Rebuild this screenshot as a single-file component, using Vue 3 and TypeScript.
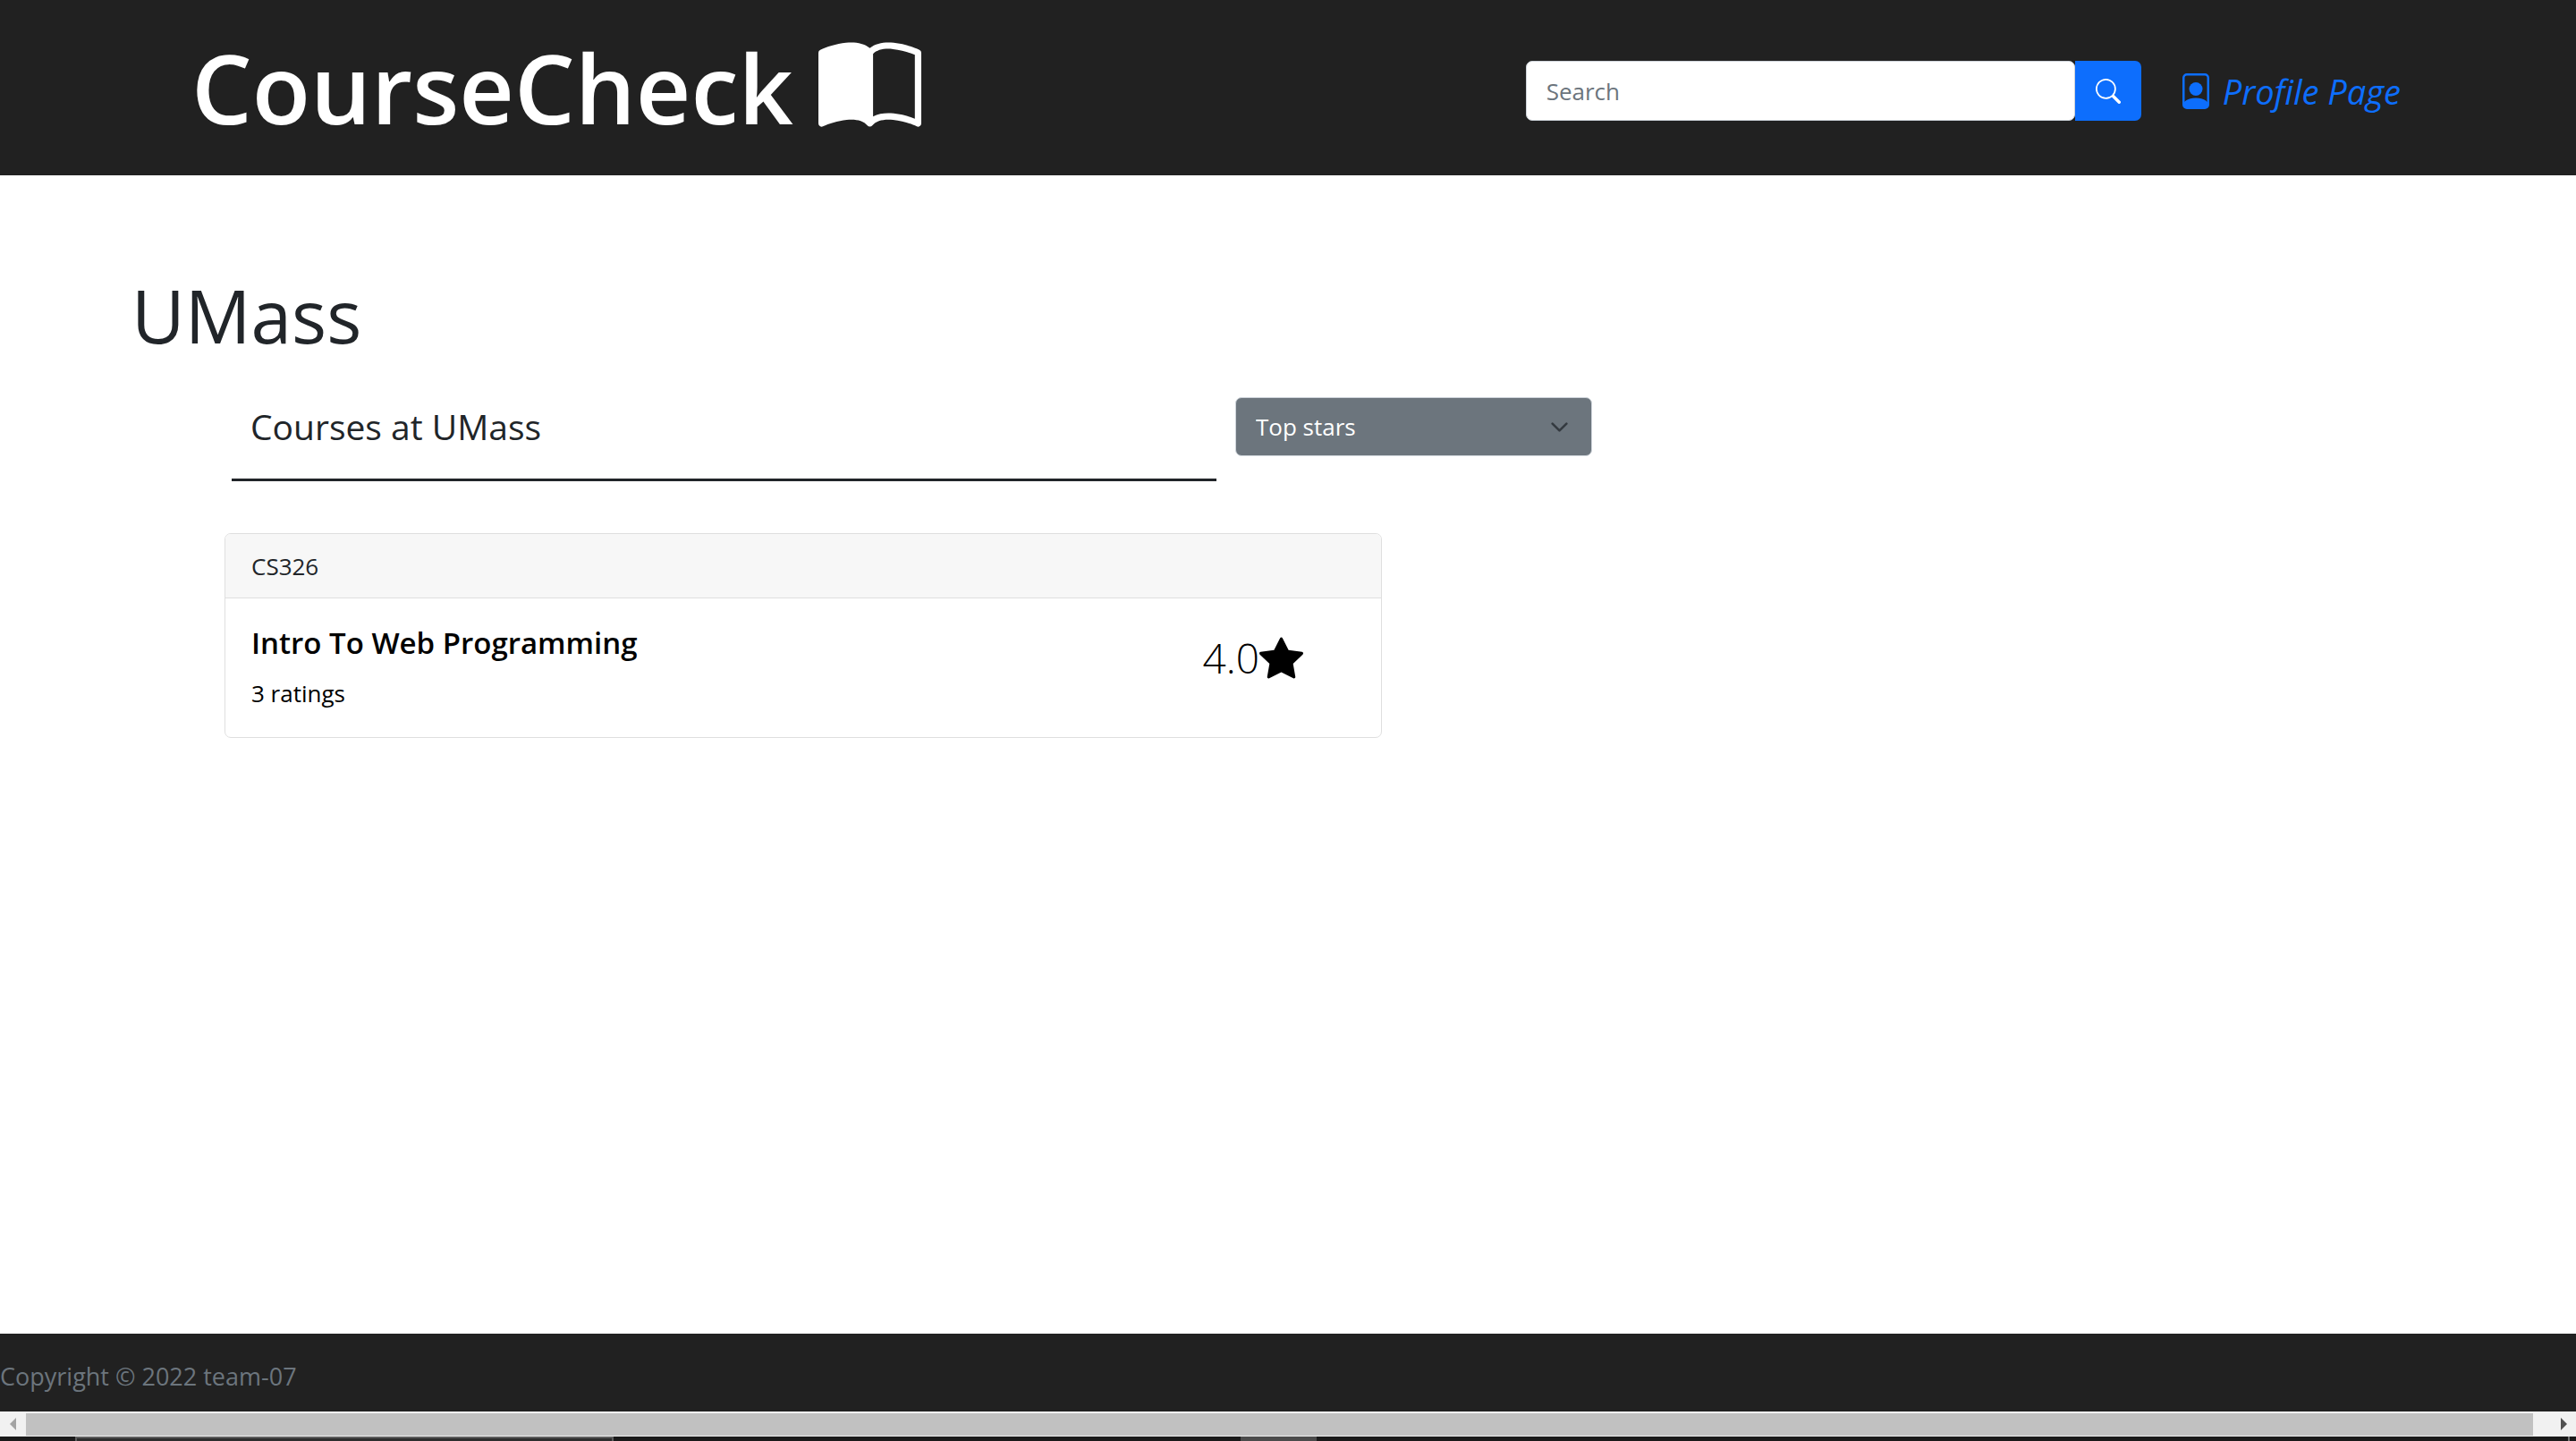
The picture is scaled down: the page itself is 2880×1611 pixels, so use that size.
<script setup lang="ts">
import { computed, ref } from 'vue'

interface Course {
  code: string
  title: string
  ratings: number
  stars: number
}

const school = 'UMass'
const query = ref('')
const order = ref<'stars' | 'ratings'>('stars')

const courses = ref<Course[]>([
  { code: 'CS326', title: 'Intro To Web Programming', ratings: 3, stars: 4 },
])

const sortedCourses = computed<Course[]>(() =>
  [...courses.value].sort((a, b) => b[order.value] - a[order.value]),
)
</script>

<template>
  <div class="page">
    <header class="topbar">
      <a class="brand" href="#">
        <span>CourseCheck</span>
        <svg class="brand-icon" viewBox="0 0 16 16" fill="currentColor" aria-hidden="true">
          <path d="M8.5 2.687c.654-.689 1.782-.886 3.112-.752 1.234.124 2.503.523 3.388.893v9.923c-.918-.35-2.107-.692-3.287-.81-1.094-.111-2.278-.039-3.213.492V2.687zM8 1.783C7.015.936 5.587.81 4.287.94c-1.514.153-3.042.672-3.994 1.105A.5.5 0 0 0 0 2.5v11a.5.5 0 0 0 .707.455c.882-.4 2.303-.881 3.68-1.02 1.409-.142 2.59.087 3.223.877a.5.5 0 0 0 .78 0c.633-.79 1.814-1.019 3.222-.877 1.378.139 2.8.62 3.681 1.02A.5.5 0 0 0 16 13.5v-11a.5.5 0 0 0-.293-.455c-.952-.433-2.48-.952-3.994-1.105C10.413.809 8.985.936 8 1.783z" />
        </svg>
      </a>
      <form class="search" role="search" @submit.prevent>
        <input v-model="query" class="search-input" type="search" placeholder="Search" aria-label="Search" />
        <button class="search-button" type="submit" aria-label="Submit search">
          <svg viewBox="0 0 16 16" fill="currentColor" aria-hidden="true">
            <path d="M11.742 10.344a6.5 6.5 0 1 0-1.397 1.398h-.001c.03.04.062.078.098.115l3.85 3.85a1 1 0 0 0 1.415-1.414l-3.85-3.85a1.007 1.007 0 0 0-.115-.1zM12 6.5a5.5 5.5 0 1 1-11 0 5.5 5.5 0 0 1 11 0z" />
          </svg>
        </button>
      </form>
      <a class="profile" href="#profile">
        <svg viewBox="0 0 16 16" fill="currentColor" aria-hidden="true">
          <path d="M12 1a1 1 0 0 1 1 1v10.755S12 11 8 11s-5 1.755-5 1.755V2a1 1 0 0 1 1-1h8zM4 0a2 2 0 0 0-2 2v12a2 2 0 0 0 2 2h8a2 2 0 0 0 2-2V2a2 2 0 0 0-2-2H4z" />
          <path d="M8 10a3 3 0 1 0 0-6 3 3 0 0 0 0 6z" />
        </svg>
        <span>Profile Page</span>
      </a>
    </header>

    <main class="content">
      <h1 class="school">{{ school }}</h1>
      <div class="toolbar">
        <h2 class="subtitle">Courses at {{ school }}</h2>
        <div class="sort">
          <select v-model="order" class="sort-select" aria-label="Sort courses">
            <option value="stars">Top stars</option>
            <option value="ratings">Most ratings</option>
          </select>
          <svg class="chevron" viewBox="0 0 16 16" fill="none" aria-hidden="true">
            <path d="M2 5l6 6 6-6" stroke="currentColor" stroke-width="2" stroke-linecap="round" stroke-linejoin="round" />
          </svg>
        </div>
      </div>

      <article v-for="course in sortedCourses" :key="course.code" class="card">
        <div class="card-header">{{ course.code }}</div>
        <div class="card-body">
          <div>
            <h3 class="card-title">{{ course.title }}</h3>
            <p class="card-text">{{ course.ratings }} ratings</p>
          </div>
          <div class="score">
            <span>{{ course.stars.toFixed(1) }}</span>
            <svg viewBox="0 0 16 16" fill="currentColor" aria-hidden="true">
              <path d="M3.612 15.443c-.386.198-.824-.149-.746-.592l.83-4.73L.173 6.765c-.329-.314-.158-.888.283-.95l4.898-.696L7.538.792c.197-.39.73-.39.927 0l2.184 4.327 4.898.696c.441.062.612.636.282.95l-3.522 3.356.83 4.73c.078.443-.36.79-.746.592L8 13.187l-4.389 2.256z" />
            </svg>
          </div>
        </div>
      </article>
    </main>

    <footer class="footer">Copyright © 2022 team-07</footer>

    <div class="scrollbar" aria-hidden="true">
      <svg class="arrow arrow-left" viewBox="0 0 7 14"><path d="M7 0v14L0 7z" fill="currentColor" /></svg>
      <div class="thumb"></div>
      <svg class="arrow arrow-right" viewBox="0 0 7 14"><path d="M0 0v14l7-7z" fill="currentColor" /></svg>
    </div>
    <div class="taskbar" aria-hidden="true">
      <div class="task-window"></div>
      <div class="task-active"></div>
      <div class="task-edge"></div>
    </div>
  </div>
</template>

<style>
body {
  margin: 0;
  background: #fff;
}
</style>

<style scoped>
.page {
  box-sizing: border-box;
  display: flex;
  flex-direction: column;
  min-height: 100vh;
  color: #212529;
  font-family: "Open Sans", "Noto Sans", sans-serif;
  font-size: 26px;
  line-height: 40px;
}

.topbar {
  display: flex;
  align-items: center;
  height: 196px;
  padding: 0 196px 0 214px;
  background: #212121;
}

.brand {
  display: flex;
  align-items: center;
  gap: 28px;
  margin-right: auto;
  color: #fff;
  font-size: 107px;
  font-weight: 600;
  line-height: 140px;
  text-decoration: none;
}

.brand-icon {
  width: 115px;
  height: 115px;
}

.search {
  display: flex;
  width: 24vw;
  max-width: 688px;
  height: 67px;
  margin: 7px 41px 0 0;
}

.search-input {
  box-sizing: border-box;
  flex: 1;
  min-width: 0;
  padding: 0 22px;
  border: 1px solid #ced4da;
  border-radius: 7px;
  outline: 0;
  background: #fff;
  color: #212529;
  font: inherit;
  appearance: none;
}

.search-input::placeholder {
  color: #6c757d;
  opacity: 1;
}

.search-button {
  display: flex;
  align-items: center;
  justify-content: center;
  width: 74px;
  padding: 0;
  border: 0;
  border-radius: 0 7px 7px 0;
  background: #0d6efd;
  color: #fff;
}

.search-button svg {
  width: 28px;
  height: 28px;
}

.profile {
  display: flex;
  align-items: center;
  gap: 10px;
  margin-top: 7px;
  color: #0d6efd;
  font-size: 38px;
  font-style: italic;
  line-height: 56px;
  text-decoration: none;
}

.profile svg {
  width: 40px;
  height: 40px;
}

.content {
  flex: 1;
  padding: 96px 147px 0;
}

.school {
  margin: 0;
  font-size: 82px;
  font-weight: 400;
  line-height: 120px;
}

.toolbar {
  display: flex;
  align-items: flex-start;
  gap: 21px;
  max-width: 1521px;
  margin: 32px 0 0 112px;
}

.subtitle {
  flex: 1;
  margin: 0;
  padding: 5px 21px 30px;
  border-bottom: 3px solid #212529;
  font-size: 39px;
  font-weight: 400;
  line-height: 56px;
}

.sort {
  position: relative;
  width: 399px;
}

.sort-select {
  box-sizing: border-box;
  display: block;
  width: 100%;
  height: 66px;
  padding: 0 64px 0 22px;
  border: 1px solid #ced4da;
  border-radius: 7px;
  background: #6c757d;
  color: #fff;
  font: inherit;
  appearance: none;
}

.chevron {
  position: absolute;
  top: 23px;
  right: 26px;
  width: 21px;
  height: 21px;
  color: #343a40;
  pointer-events: none;
}

.card {
  box-sizing: border-box;
  max-width: 1294px;
  margin: 58px 0 0 104px;
  border: 1px solid #dfdfdf;
  border-radius: 7px;
  background: #fff;
}

.card-header {
  padding: 16px 29px 15px;
  border-bottom: 1px solid #dfdfdf;
  border-radius: 6px 6px 0 0;
  background: #f7f7f7;
}

.card-body {
  display: flex;
  justify-content: space-between;
  padding: 26px 87px 29px 29px;
  color: #000;
}

.card-title {
  margin: 0 0 12px;
  font-size: 33px;
  font-weight: 600;
  line-height: 48px;
}

.card-text {
  margin: 0;
}

.score {
  display: flex;
  align-items: center;
  height: 80px;
  font-size: 46px;
  font-weight: 350;
  line-height: 64px;
}

.score svg {
  width: 49px;
  height: 49px;
}

.footer {
  height: 40px;
  padding: 28px 0 19px;
  background: #212121;
  color: #6c757d;
  font-size: 27px;
}

.scrollbar {
  display: flex;
  align-items: center;
  height: 28px;
  background: #f1f1f1;
}

.arrow {
  width: 7px;
  height: 14px;
}

.arrow-left {
  margin: 0 11px;
  color: #a3a3a3;
}

.arrow-right {
  margin: 0 10px 0 31px;
  color: #505050;
}

.thumb {
  flex: 1;
  height: 25px;
  background: #c1c1c1;
}

.taskbar {
  display: flex;
  height: 5px;
  padding: 0 7px 0 84px;
  background: #1a1a1a;
}

.task-window {
  box-sizing: border-box;
  width: 602px;
  border: 2px solid #5c5c5c;
  border-width: 2px 2px 0;
  background: #2d2d2d;
}

.task-active {
  width: 85px;
  margin-left: 701px;
  background: #4b4b4b;
}

.task-edge {
  width: 2px;
  margin-left: auto;
  background: #777;
}
</style>
